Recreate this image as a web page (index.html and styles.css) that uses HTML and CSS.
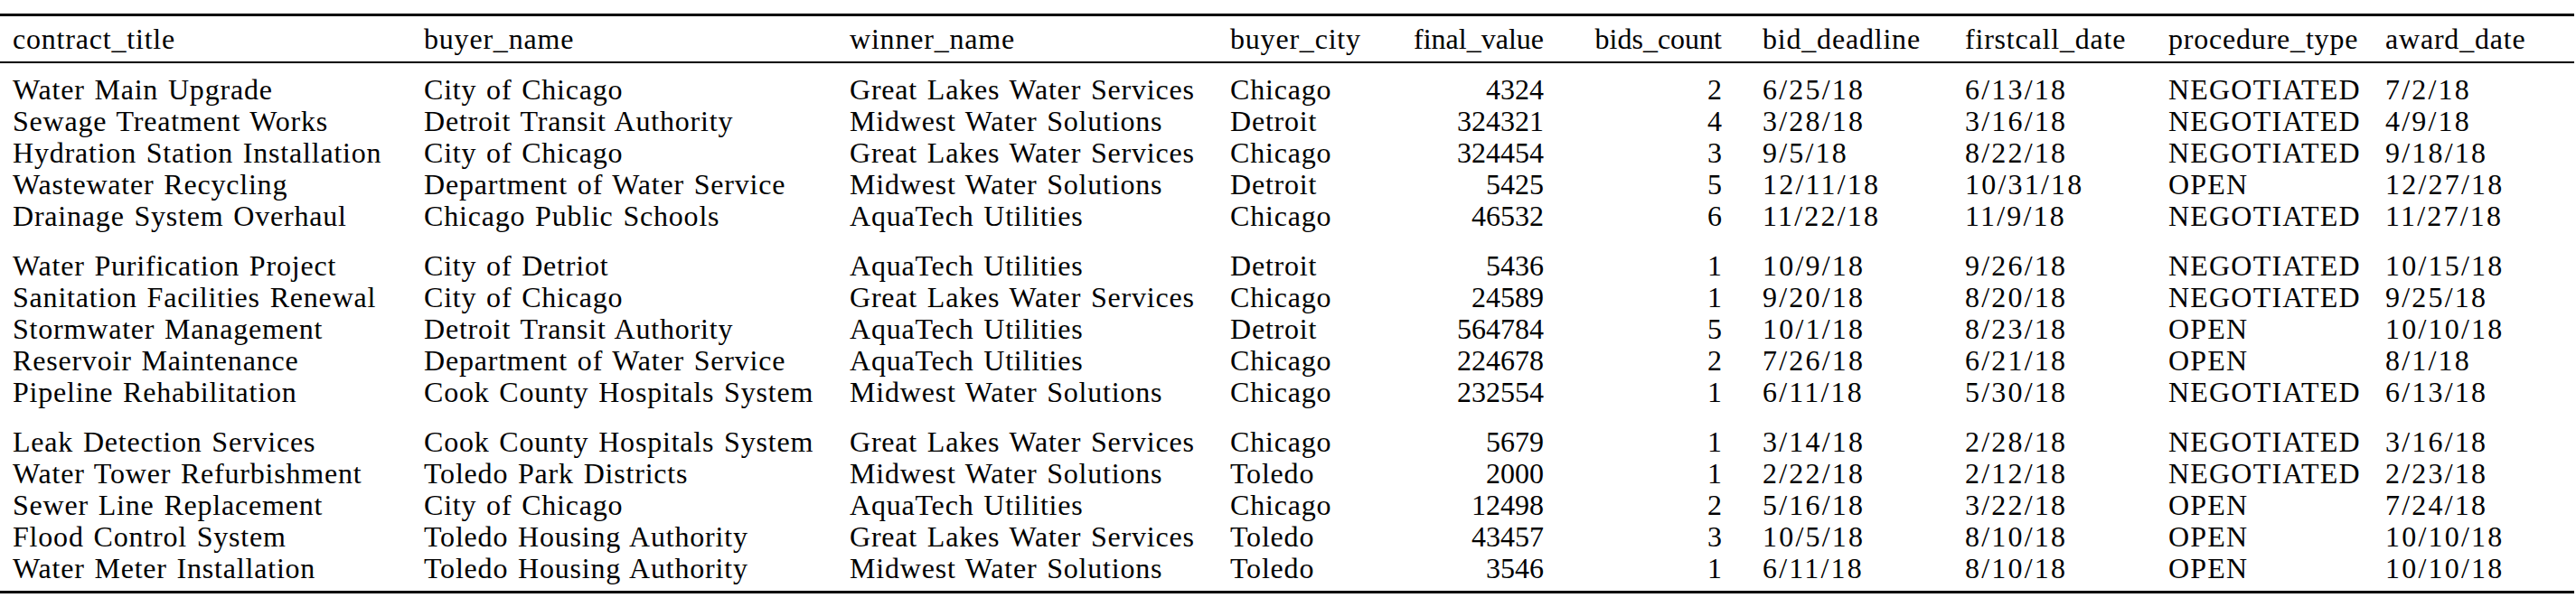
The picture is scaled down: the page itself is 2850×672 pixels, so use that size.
FILE: index.html
```html
<!DOCTYPE html>
<html>
<head>
<meta charset="utf-8">
<link rel="stylesheet" href="styles.css">
</head>
<body>
<div class="page">
<table class="tbl">
<colgroup>
<col class="w1"><col class="w2"><col class="w3"><col class="w4"><col class="w5"><col class="w6"><col class="w7"><col class="w8"><col class="w9"><col class="w10">
</colgroup>
<thead>
<tr><th class="c1">contract_title</th><th>buyer_name</th><th>winner_name</th><th>buyer_city</th><th class="num">final_value</th><th class="num">bids_count</th><th class="c7">bid_deadline</th><th>firstcall_date</th><th>procedure_type</th><th>award_date</th></tr>
</thead>
<tbody>
<tr><td class="c1">Water Main Upgrade</td><td>City of Chicago</td><td>Great Lakes Water Services</td><td>Chicago</td><td class="num">4324</td><td class="num">2</td><td class="c7 date">6/25/18</td><td class="date">6/13/18</td><td class="caps">NEGOTIATED</td><td class="date">7/2/18</td></tr>
<tr><td class="c1">Sewage Treatment Works</td><td>Detroit Transit Authority</td><td>Midwest Water Solutions</td><td>Detroit</td><td class="num">324321</td><td class="num">4</td><td class="c7 date">3/28/18</td><td class="date">3/16/18</td><td class="caps">NEGOTIATED</td><td class="date">4/9/18</td></tr>
<tr><td class="c1">Hydration Station Installation</td><td>City of Chicago</td><td>Great Lakes Water Services</td><td>Chicago</td><td class="num">324454</td><td class="num">3</td><td class="c7 date">9/5/18</td><td class="date">8/22/18</td><td class="caps">NEGOTIATED</td><td class="date">9/18/18</td></tr>
<tr><td class="c1">Wastewater Recycling</td><td>Department of Water Service</td><td>Midwest Water Solutions</td><td>Detroit</td><td class="num">5425</td><td class="num">5</td><td class="c7 date">12/11/18</td><td class="date">10/31/18</td><td class="caps">OPEN</td><td class="date">12/27/18</td></tr>
<tr><td class="c1">Drainage System Overhaul</td><td>Chicago Public Schools</td><td>AquaTech Utilities</td><td>Chicago</td><td class="num">46532</td><td class="num">6</td><td class="c7 date">11/22/18</td><td class="date">11/9/18</td><td class="caps">NEGOTIATED</td><td class="date">11/27/18</td></tr>
</tbody>
<tbody>
<tr><td class="c1">Water Purification Project</td><td>City of Detriot</td><td>AquaTech Utilities</td><td>Detroit</td><td class="num">5436</td><td class="num">1</td><td class="c7 date">10/9/18</td><td class="date">9/26/18</td><td class="caps">NEGOTIATED</td><td class="date">10/15/18</td></tr>
<tr><td class="c1">Sanitation Facilities Renewal</td><td>City of Chicago</td><td>Great Lakes Water Services</td><td>Chicago</td><td class="num">24589</td><td class="num">1</td><td class="c7 date">9/20/18</td><td class="date">8/20/18</td><td class="caps">NEGOTIATED</td><td class="date">9/25/18</td></tr>
<tr><td class="c1">Stormwater Management</td><td>Detroit Transit Authority</td><td>AquaTech Utilities</td><td>Detroit</td><td class="num">564784</td><td class="num">5</td><td class="c7 date">10/1/18</td><td class="date">8/23/18</td><td class="caps">OPEN</td><td class="date">10/10/18</td></tr>
<tr><td class="c1">Reservoir Maintenance</td><td>Department of Water Service</td><td>AquaTech Utilities</td><td>Chicago</td><td class="num">224678</td><td class="num">2</td><td class="c7 date">7/26/18</td><td class="date">6/21/18</td><td class="caps">OPEN</td><td class="date">8/1/18</td></tr>
<tr><td class="c1">Pipeline Rehabilitation</td><td>Cook County Hospitals System</td><td>Midwest Water Solutions</td><td>Chicago</td><td class="num">232554</td><td class="num">1</td><td class="c7 date">6/11/18</td><td class="date">5/30/18</td><td class="caps">NEGOTIATED</td><td class="date">6/13/18</td></tr>
</tbody>
<tbody>
<tr><td class="c1">Leak Detection Services</td><td>Cook County Hospitals System</td><td>Great Lakes Water Services</td><td>Chicago</td><td class="num">5679</td><td class="num">1</td><td class="c7 date">3/14/18</td><td class="date">2/28/18</td><td class="caps">NEGOTIATED</td><td class="date">3/16/18</td></tr>
<tr><td class="c1">Water Tower Refurbishment</td><td>Toledo Park Districts</td><td>Midwest Water Solutions</td><td>Toledo</td><td class="num">2000</td><td class="num">1</td><td class="c7 date">2/22/18</td><td class="date">2/12/18</td><td class="caps">NEGOTIATED</td><td class="date">2/23/18</td></tr>
<tr><td class="c1">Sewer Line Replacement</td><td>City of Chicago</td><td>AquaTech Utilities</td><td>Chicago</td><td class="num">12498</td><td class="num">2</td><td class="c7 date">5/16/18</td><td class="date">3/22/18</td><td class="caps">OPEN</td><td class="date">7/24/18</td></tr>
<tr><td class="c1">Flood Control System</td><td>Toledo Housing Authority</td><td>Great Lakes Water Services</td><td>Toledo</td><td class="num">43457</td><td class="num">3</td><td class="c7 date">10/5/18</td><td class="date">8/10/18</td><td class="caps">OPEN</td><td class="date">10/10/18</td></tr>
<tr><td class="c1">Water Meter Installation</td><td>Toledo Housing Authority</td><td>Midwest Water Solutions</td><td>Toledo</td><td class="num">3546</td><td class="num">1</td><td class="c7 date">6/11/18</td><td class="date">8/10/18</td><td class="caps">OPEN</td><td class="date">10/10/18</td></tr>
</tbody>
</table>
</div>
</body>
</html>
```
FILE: styles.css
```css
html, body {
  margin: 0;
  padding: 0;
  background: #ffffff;
}
.page {
  padding-top: 15px;
}
.tbl {
  border-collapse: collapse;
  table-layout: fixed;
  width: 2848px;
  font-family: "Liberation Serif", "Times New Roman", serif;
  font-size: 32px;
  letter-spacing: 0.8px;
  word-spacing: 2px;
  color: #000;
}
.w1 { width: 469px; }
.w2 { width: 471px; }
.w3 { width: 421px; }
.w4 { width: 169px; }
.w5 { width: 178px; }
.w6 { width: 197px; }
.w7 { width: 269px; }
.w8 { width: 225px; }
.w9 { width: 240px; }
.w10 { width: 209px; }
.tbl th, .tbl td {
  padding: 0;
  text-align: left;
  font-weight: normal;
  line-height: 35px;
  white-space: nowrap;
}
.tbl .c1 { padding-left: 14px; }
.tbl .c7 { padding-left: 45px; }
.tbl .num { text-align: right; letter-spacing: 0; }
.tbl .caps { letter-spacing: 1.2px; }
.tbl .date { letter-spacing: 2.2px; }
.tbl thead th {
  border-top: 3px solid #000;
  border-bottom: 2px solid #000;
  padding-top: 8px;
  padding-bottom: 7px;
}
.tbl tbody:first-of-type tr:first-child td {
  padding-top: 12px;
}
.tbl tbody + tbody tr:first-child td {
  padding-top: 20px;
}
.tbl tbody:last-child tr:last-child td {
  padding-bottom: 7px;
  border-bottom: 3px solid #000;
}
```
